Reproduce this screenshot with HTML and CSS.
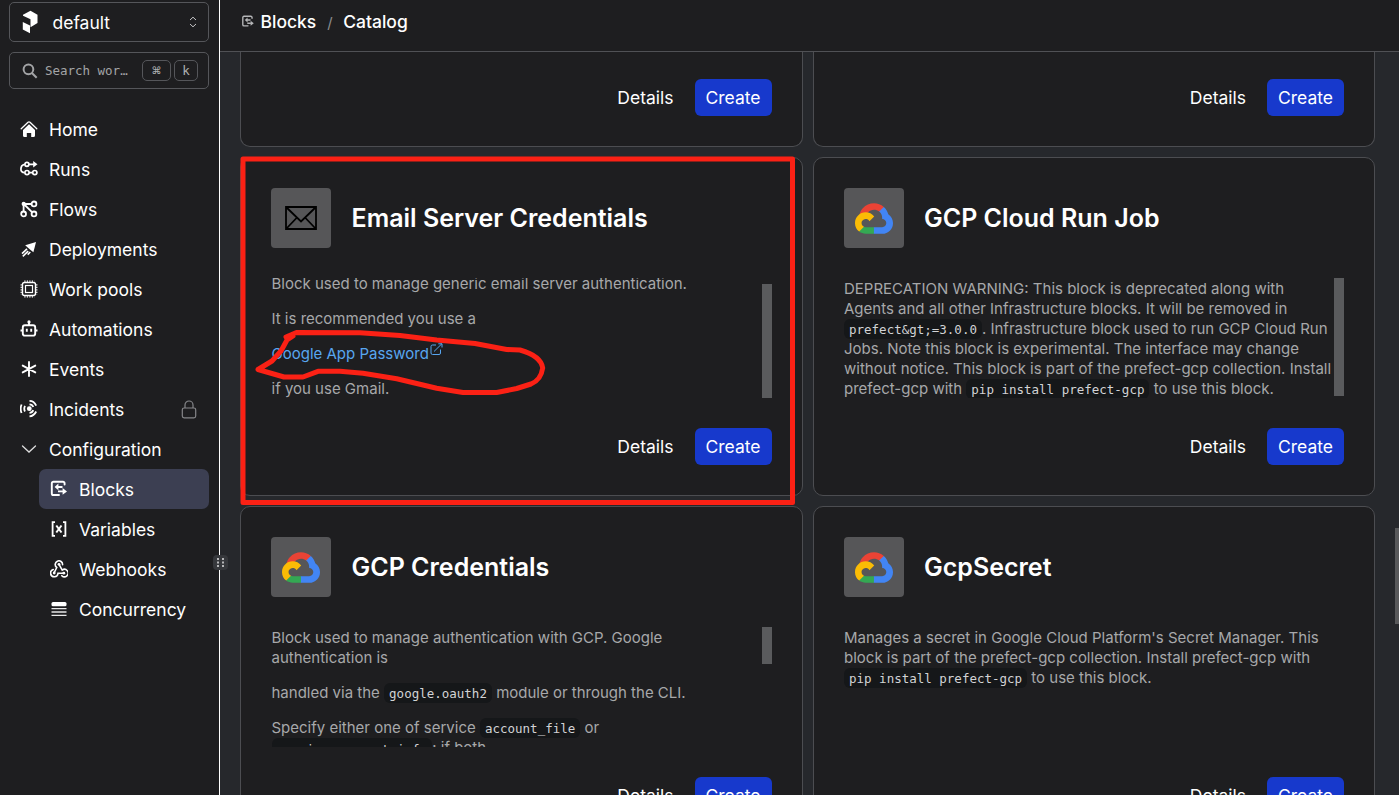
FILE: index.html
```html
<!DOCTYPE html>
<html lang="en">
<head>
<meta charset="utf-8">
<title>Blocks / Catalog</title>
<link rel="stylesheet" href="styles.css">
</head>
<body>
<svg class="defs" aria-hidden="true">
  <symbol id="gcp" viewBox="0 0 256 206">
    <path fill="#EA4335" d="M170.25 56.82 192.5 34.57 193.99 25.2C153.44-11.68 88.98-7.5 52.42 33.92 42.27 45.42 34.73 59.76 30.72 74.57L38.69 73.45 83.19 66.11 86.63 62.6C106.42 40.85 139.9 37.93 162.76 56.43Z"/>
    <path fill="#4285F4" d="M224.2 73.92C219.09 55.08 208.59 38.15 193.99 25.2L162.76 56.43C175.94 67.2 183.46 83.44 183.13 100.47V106.01C198.49 106.01 210.93 118.45 210.93 133.81 210.93 149.16 198.49 161.29 183.13 161.29H127.46L122 167.22V200.56L127.46 205.8H183.13C223.06 206.11 255.69 174.3 256 134.37 256.19 110.17 244.25 87.48 224.2 73.92"/>
    <path fill="#34A853" d="M71.87 205.8H127.46V161.29H71.87C67.91 161.29 64.07 160.44 60.47 158.79L52.58 161.21 30.18 183.46 28.22 191.04C40.79 200.53 56.12 205.86 71.87 205.8"/>
    <path fill="#FBBC05" d="M71.87 61.43C31.94 61.66-.24 94.23 0 134.16.13 156.46 10.55 177.45 28.22 191.04L60.47 158.79C46.48 152.47 40.26 136 46.58 122.02 52.9 108.03 69.37 101.81 83.36 108.13 89.52 110.91 94.46 115.85 97.25 122.02L129.49 89.77C115.77 71.83 94.45 61.34 71.87 61.43"/>
  </symbol>
  <symbol id="blocks" viewBox="0 0 18 18">
    <path d="M14.600 4.600V3.400A1.600 1.600 0 0 0 13 1.800H3.400A1.600 1.600 0 0 0 1.800 3.400V13.400A1.600 1.600 0 0 0 3.400 15H9" fill="none" stroke="currentColor" stroke-width="1.900" stroke-linecap="round"/>
    <path d="M7 7H12.500M8 11.400H13" fill="none" stroke="currentColor" stroke-width="1.900"/>
    <path d="M8.400 3.500V10.300L4.600 6.900ZM12.600 8V14.800L17 11.400Z" fill="currentColor"/>
  </symbol>
</svg>
<div class="app">
  <aside class="sidebar">
    <div class="workspace">
      <svg class="logo" width="16" height="24" viewBox="0 0 16 24"><path fill="#fff" d="M1 4.700 8.500.8 15.500 4.700V13L8.500 17.200V9.200L1 5.800ZM.8 12 8 15.500V23.200L.8 19.500Z"/></svg>
      <span>default</span>
      <svg class="updown" width="8" height="12" viewBox="0 0 8 12"><path d="M1 4 4 1.200 7 4M1 8 4 10.800 7 8" fill="none" stroke="#c4c4c6" stroke-width="1"/></svg>
    </div>
    <div class="search">
      <svg width="16" height="16" viewBox="0 0 16 16"><circle cx="6.500" cy="6.300" r="4.900" fill="none" stroke="#a3a4a6" stroke-width="2"/><path d="m10 10 4.800 4.800" stroke="#a3a4a6" stroke-width="2.100"/></svg>
      <span class="search-text">Search wor…</span>
      <kbd class="cmd">⌘</kbd><kbd>k</kbd>
    </div>
    <nav>
      <a class="item"><svg class="ico" viewBox="0 0 18 18"><path d="M1.200 8.800 8 2.300Q9 1.400 10 2.300L16.800 8.800" fill="none" stroke="#fff" stroke-width="1.300" stroke-linecap="round"/><path fill="#fff" d="M9 4.300 15 9.900V15.500Q15 17 13.500 17H11.200V13H6.800V17H4.500Q3 17 3 15.500V9.900Z"/></svg>Home</a>
      <a class="item"><svg class="ico" viewBox="0 0 18 18"><g fill="none" stroke="#fff" stroke-width="1.700"><path d="M4.800 4.500H4Q.9 5.400.9 9 .9 12.600 4.500 12.600M8.800 4.300H14M9 12.600H12.500"/><circle cx="6.900" cy="4.300" r="2"/><circle cx="7" cy="12.600" r="2.100"/><circle cx="14.800" cy="12.600" r="2.100"/></g><path fill="#fff" d="m13.200 1 4.300 3.300-4.300 3.300Z"/></svg>Runs</a>
      <a class="item"><svg class="ico" viewBox="0 0 18 18"><g fill="none" stroke="#fff" stroke-width="1.800"><path d="M3.800 4H11.500M3.600 4V11.500M3.800 4 12 12.200"/><circle cx="14" cy="3.900" r="2.400"/><circle cx="3.600" cy="13.900" r="2.400"/><circle cx="14" cy="13.900" r="2.400"/></g><circle cx="3.700" cy="3.900" r="2.100" fill="#fff"/></svg>Flows</a>
      <a class="item"><svg class="ico" viewBox="0 0 18 18"><path fill="#fff" d="M16 2 13.400 12.300 10.300 9.800 7.700 7.600 5.200 5.200Z"/><path d="m7 8.800-5 4.800M8.200 11.200 2.800 16.300M10.300 12 7.700 14.600" stroke="#fff" stroke-width="1.600"/></svg>Deployments</a>
      <a class="item"><svg class="ico" viewBox="0 0 18 18"><g fill="none" stroke="#fff"><rect x="2.500" y="2.500" width="13" height="13" rx="2" stroke-width="1.400"/><rect x="5.500" y="5.500" width="7" height="7" stroke-width="1.200"/><path stroke-width="1.200" stroke-dasharray="1.200 1.300" d="M4.300 1.200H14.500M4.300 16.800H14.500M1.200 4.300V14.500M16.800 4.300V14.500"/></g></svg>Work pools</a>
      <a class="item"><svg class="ico" viewBox="0 0 18 18"><g fill="none" stroke="#fff" stroke-width="1.900"><rect x="2.800" y="5.300" width="12.400" height="10.300" rx="2.200"/><path d="M9 5V2M.5 10.500H2.500M15.500 10.500H17.500M6.800 8.700V11.800M11.200 8.700V11.800"/></g><circle cx="9" cy="1.900" r="1.600" fill="#fff"/></svg>Automations</a>
      <a class="item"><svg class="ico" viewBox="0 0 18 18"><path d="M9 2V16M2.700 5.600 15.300 12.400M15.300 5.600 2.700 12.400" stroke="#fff" stroke-width="1.900" stroke-linecap="round"/></svg>Events</a>
      <a class="item"><svg class="ico" viewBox="0 0 18 18"><circle cx="9.300" cy="8.700" r="2.400" fill="#fff"/><g fill="none" stroke="#fff" stroke-width="1.800"><path d="M1.600 4.500Q-.3 8.700 1.600 13M5 5.800Q3.500 8.700 5 11.500M9.500.9Q14 1 16.200 5.600M9.500 4.300Q12.200 4.400 13.300 7M9.500 16.400Q14 16 16.200 11.500M9.500 12.900Q12.200 12.800 13.300 10.200"/></g></svg>Incidents
        <svg class="lock" width="16" height="19" viewBox="0 0 16 19"><g fill="none" stroke="#858689" stroke-width="1.200"><rect x="1.300" y="8" width="13.400" height="9.800" rx="1.800"/><path d="M4 8V5A4 4 0 0 1 12 5V8"/></g></svg></a>
      <a class="item"><svg class="ico" viewBox="0 0 18 18"><path d="m2.500 6 6.500 6 6.500-6" fill="none" stroke="#ddd" stroke-width="1.300" stroke-linecap="round"/></svg>Configuration</a>
      <a class="item sub active"><svg class="ico"><use href="#blocks"/></svg>Blocks</a>
      <a class="item sub"><svg class="ico" viewBox="0 0 18 18"><g fill="none" stroke="#fff" stroke-width="1.800"><path d="M5 2.200H2.600V15.800H5M13 2.200H15.400V15.800H13"/><path stroke-width="2" d="m6.300 5.500 5.200 7M11.500 5.500 6.300 12.500"/></g></svg>Variables</a>
      <a class="item sub"><svg class="ico" viewBox="0 0 18 18"><g fill="none" stroke="#fff" stroke-linecap="round"><path stroke-width="1.600" d="M12.600 4.800A3.700 3.700 0 1 0 6.700 7.500L4.300 12.500M9 4.300 12.200 10.100A3.700 3.700 0 1 1 11.800 15.700M3.200 9.500A3.700 3.700 0 1 0 8 13.200H13.500"/></g><g fill="#fff"><circle cx="9" cy="4.300" r="1.400"/><circle cx="4.200" cy="13" r="1.400"/><circle cx="13.800" cy="13.200" r="1.400"/></g></svg>Webhooks</a>
      <a class="item sub"><svg class="ico" viewBox="0 0 18 18"><rect x="1.500" y="2" width="15" height="4.300" rx="1.500" fill="#fff"/><path d="M1.500 8.700H16.500M1.500 12H16.500M1.500 15.300H16.500" stroke="#e8e8e8" stroke-width="1.300"/></svg>Concurrency</a>
    </nav>
    <div class="handle"><svg width="15" height="15" viewBox="0 0 15 15"><g fill="#b5b6b8"><rect x="4" y="3" width="2" height="2"/><rect x="9" y="3" width="2" height="2"/><rect x="4" y="6.500" width="2" height="2"/><rect x="9" y="6.500" width="2" height="2"/><rect x="4" y="10" width="2" height="2"/><rect x="9" y="10" width="2" height="2"/></g></svg></div>
  </aside>
  <main>
    <header><svg class="crumb-ico"><use href="#blocks"/></svg><span>Blocks</span><span class="slash">/</span><span>Catalog</span></header>
    <div class="viewport">
      <div class="grid">
        <section class="card stub"><div class="actions"><button class="ghost">Details</button><button class="primary">Create</button></div></section>
        <section class="card stub"><div class="actions"><button class="ghost">Details</button><button class="primary">Create</button></div></section>

        <section class="card">
          <div class="head"><div class="tile"><svg width="32" height="24" viewBox="0 0 32 24"><path d="M1 1H31V23H1ZM1 1 16 15.500 31 1M1 23 12 11.500M31 23 20 11.500" fill="none" stroke="#000" stroke-width="1.800"/></svg></div><h2>Email Server Credentials</h2></div>
          <div class="desc"><div class="text scrolled-end"><p>Block used to manage generic email server authentication.</p><p>It is recommended you use a</p><p><a class="link">Google App Password<svg width="13" height="13" viewBox="0 0 13 13"><path d="M6 2H2.500Q1 2 1 3.500V10Q1 11.500 2.500 11.500H9Q10.500 11.500 10.500 10V6.500M4 8.500 11.800.8M8.300.8H12V4.500" fill="none" stroke="#58a6f0" stroke-width="1"/></svg></a></p><p>if you use Gmail.</p></div><i class="thumb low"></i></div>
          <div class="actions"><button class="ghost">Details</button><button class="primary">Create</button></div>
        </section>

        <section class="card">
          <div class="head"><div class="tile"><svg width="38" height="31"><use href="#gcp"/></svg></div><h2>GCP Cloud Run Job</h2></div>
          <div class="desc"><div class="text"><p>DEPRECATION WARNING: This block is deprecated along with<br>Agents and all other Infrastructure blocks. It will be removed in<br><code>prefect&amp;gt;=3.0.0</code>. Infrastructure block used to run GCP Cloud Run<br>Jobs. Note this block is experimental. The interface may change<br>without notice. This block is part of the prefect-gcp collection. Install<br>prefect-gcp with <code>pip install prefect-gcp</code> to use this block.</p></div><i class="thumb tall"></i></div>
          <div class="actions"><button class="ghost">Details</button><button class="primary">Create</button></div>
        </section>

        <section class="card">
          <div class="head"><div class="tile"><svg width="38" height="31"><use href="#gcp"/></svg></div><h2>GCP Credentials</h2></div>
          <div class="desc"><div class="text"><p>Block used to manage authentication with GCP. Google<br>authentication is</p><p>handled via the <code>google.oauth2</code> module or through the CLI.</p><p>Specify either one of service <code>account_file</code> or<br><code class="dropped">service_account_info</code>; if both</p></div><i class="thumb short"></i></div>
          <div class="actions"><button class="ghost">Details</button><button class="primary">Create</button></div>
        </section>

        <section class="card">
          <div class="head"><div class="tile"><svg width="38" height="31"><use href="#gcp"/></svg></div><h2>GcpSecret</h2></div>
          <div class="desc"><div class="text"><p>Manages a secret in Google Cloud Platform's Secret Manager. This<br>block is part of the prefect-gcp collection. Install prefect-gcp with<br><code>pip install prefect-gcp</code> to use this block.</p></div></div>
          <div class="actions"><button class="ghost">Details</button><button class="primary">Create</button></div>
        </section>
      </div>
    </div>
    <i class="page-thumb"></i>
  </main>
  <svg class="markup" viewBox="0 0 1399 795"><g fill="none" stroke="#fb2115" stroke-width="5" stroke-linejoin="round" stroke-linecap="round"><rect x="243" y="159" width="549.500" height="343.500"/><path d="M286 337 296.500 332.500 360 332.700 400 335.500 436.700 340 475 343.500 506.700 349.500 520 350Q541 356 542.700 368 541 380 531 384L516.700 388.500 496.700 392.500 463 392.500 436.700 388.300 396.700 378.700 363 373.300 340 371.300H318L303 377H284L258 369.500 272 361 281 351 287 340 293 336"/></g></svg>
</div>
</body>
</html>
```

FILE: styles.css
```css
* { box-sizing: border-box; }
body { margin: 0; background: #26282c; color: #fff; font: 17.5px/26px Inter, "Liberation Sans", sans-serif; overflow: hidden; }
.defs { display: none; }
.app { position: relative; display: flex; width: 1399px; height: 795px; overflow: hidden; }

.sidebar { position: relative; flex: none; width: 220px; padding: 2px 10px 0 9px; background: #1e1e20; border-right: 1px solid #fff; }
.workspace, .search { display: flex; align-items: center; width: 200px; border: 1px solid #55565a; border-radius: 5px; }
.workspace { height: 40px; padding: 0 11px 0 12px; }
.workspace span { margin-left: 14.5px; padding-top: 2px; }
.updown { margin-left: auto; }
.search { height: 37px; margin-top: 10px; padding: 0 10px 0 12px; }
.search-text { width: 98px; margin-left: 7px; padding-top: 1px; color: #a3a4a6; font: 12.5px/20px "DejaVu Sans Mono", monospace; white-space: nowrap; }
kbd { width: 24px; height: 21px; border: 1px solid #55565a; border-radius: 5px; color: #b0b1b3; font: 12.5px/20px "DejaVu Sans Mono", monospace; text-align: center; }
kbd.cmd { flex: none; width: 29px; margin-right: 3px; font-size: 15px; }
nav { display: flex; flex-direction: column; margin-top: 20px; }
.item { display: flex; align-items: center; width: 200px; height: 40px; padding: 2px 0 0 11px; border-radius: 7px; }
.ico { flex: none; width: 18px; height: 18px; margin: 0 11px 2px 0; }
.lock { margin: 0 12px 2px auto; }
.sub { width: 170px; margin-left: 30px; }
.active { background: #3c3f52; }
.handle { position: absolute; left: 213px; top: 555px; z-index: 2; width: 15px; height: 15px; border-radius: 4px; background: #36383c; }
.handle svg { display: block; }

main { position: relative; display: flex; flex-direction: column; flex: 1; min-width: 0; }
header { display: flex; align-items: center; flex: none; height: 52px; padding: 0 21px 8px; background: #1e1e20; border-bottom: 1px solid #505155; font-weight: 500; }
.crumb-ico { width: 14px; height: 13px; margin-right: 5.5px; color: #b5b6b8; }
.slash { margin: 3px 10.5px 0 11px; color: #8b8c8f; font-size: 15px; font-weight: 400; }
.viewport { flex: 1; padding: 0 24px 0 20px; overflow: hidden; }
.grid { display: grid; grid-template-columns: 1fr 1fr; gap: 10px; }
.card { display: flex; flex-direction: column; gap: 30px; height: 339px; padding: 30px; background: #1e1e20; border: 1px solid #4c4d51; border-radius: 10px; min-width: 0; }
.stub { height: 95px; padding-top: 27px; border-top: 0; border-radius: 0 0 10px 10px; }
.head { display: flex; align-items: center; gap: 20px; height: 60px; }
.tile { display: flex; align-items: center; justify-content: center; width: 60px; height: 60px; border-radius: 4px; background: #565658; }
h2 { margin: 0 0 0 .5px; font-size: 25px; line-height: 34px; font-weight: 600; }
.desc { display: flex; justify-content: space-between; height: 120px; overflow: hidden; color: #a7a8aa; font-size: 15px; line-height: 20px; }
.text { flex: none; width: 488px; margin-right: -10px; padding: 1px 0 0 .5px; white-space: nowrap; }
.scrolled-end { margin-top: -5px; }
p { margin: 0 0 15px; }
code { display: inline-block; height: 20px; padding: 0 5px; border-radius: 6px; background: #151719; color: #d2d3d5; font: 12.5px/21px "DejaVu Sans Mono", monospace; vertical-align: bottom; }
.dropped { line-height: 23px; }
.link { color: #58a6f0; }
.link svg { margin: -5px 0 0 1px; vertical-align: 3px; }
.thumb { flex: none; width: 10px; background: #5a5b5d; }
.low { height: 114px; margin-top: 6px; }
.tall { height: 118px; }
.short { height: 37px; }
.actions { display: flex; justify-content: flex-end; gap: 11px; height: 37px; }
button { height: 37px; padding: 0 10px; border: 0; border-radius: 6px; background: none; color: #fff; font: inherit; line-height: 37px; }
.primary { width: 77px; background: #1739cc; }
.page-thumb { position: absolute; right: 0; top: 528px; width: 4px; height: 96px; background: #58595b; }
.markup { position: absolute; left: 0; top: 0; z-index: 3; width: 1399px; height: 795px; pointer-events: none; }
```
